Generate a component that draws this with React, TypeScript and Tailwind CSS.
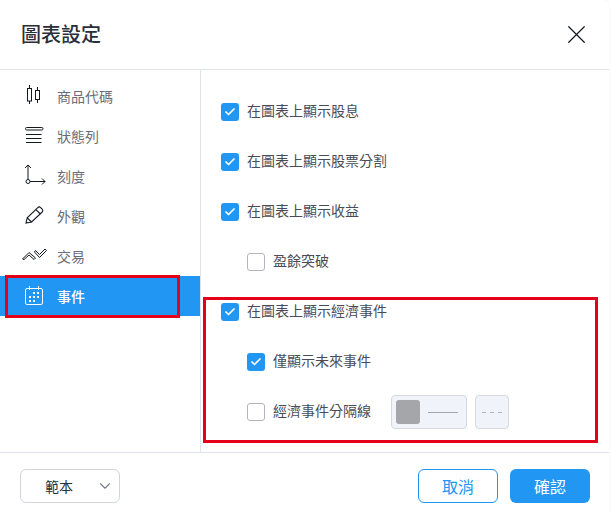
import React from 'react';
import { Check, ChevronDown, X } from 'lucide-react';

const FONT = 'font-["Noto_Sans_CJK_TC","Noto_Sans_CJK_SC",sans-serif]';

// ── Sidebar icons ────────────────────────────────────────────

const SymbolIcon = () => (
    <svg width="28" height="28" viewBox="0 0 28 28" fill="none" stroke="#131722" strokeWidth="1">
        <path d="M9.5 3v19M17.5 5v16" />
        <rect x="7.5" y="6.5" width="4" height="12.5" fill="#fff" />
        <rect x="15.5" y="8.5" width="4" height="9" fill="#fff" />
    </svg>
);

const StatusIcon = () => (
    <svg width="28" height="28" viewBox="0 0 28 28" fill="none" stroke="#131722" strokeWidth="1">
        <rect x="5.5" y="5.5" width="17.5" height="2.5" rx="1.2" />
        <path d="M6 12.5h15.5M6 16.5h15.5M6 20.5h15.5" />
    </svg>
);

const ScaleIcon = () => (
    <svg width="28" height="28" viewBox="0 0 28 28" fill="none" stroke="#131722" strokeWidth="1">
        <path d="M8 3v14.5M5 6l3-3 3 3M10 19.5h15M22 16.5l3 3-3 3" />
        <circle cx="8" cy="19.5" r="2" />
    </svg>
);

const AppearanceIcon = () => (
    <svg width="28" height="28" viewBox="0 0 28 28" fill="none" stroke="#131722" strokeWidth="1.1">
        <path d="M6 21 7.2 15.8 17.8 5.6a2 2 0 0 1 2.8 0l1.6 1.6a2 2 0 0 1 0 2.8L11.6 20z" />
        <path d="M15.8 7.6l4.6 4.4M7.2 15.8l4.4 4.2" />
    </svg>
);

const TradeIcon = () => (
    <svg width="28" height="28" viewBox="0 0 28 28" fill="none" stroke="#131722" strokeWidth="1">
        <path d="M2.5 17l6.5-6.5 6.5 5.5-1.5 1.5-5-4.5-5 4.5z" />
        <path d="M14.5 10l5 5.5 7-7-1.5-1.5-5.5 5.5-4-4z" />
    </svg>
);

const EventsIcon = () => (
    <svg width="28" height="28" viewBox="0 0 28 28" fill="none" stroke="#fff" strokeWidth="1">
        <rect x="5.5" y="6.5" width="17" height="16" rx="1.5" />
        <path d="M9.5 4v4M18.5 4v4" />
        <g fill="#fff" stroke="none">
            <rect x="13" y="10" width="2" height="2" />
            <rect x="17" y="10" width="2" height="2" />
            <rect x="9" y="14" width="2" height="2" />
            <rect x="13" y="14" width="2" height="2" />
            <rect x="17" y="14" width="2" height="2" />
            <rect x="9" y="18" width="2" height="2" />
            <rect x="13" y="18" width="2" height="2" />
        </g>
    </svg>
);

const NAV_ITEMS = [
    { label: '商品代碼', icon: <SymbolIcon /> },
    { label: '狀態列', icon: <StatusIcon /> },
    { label: '刻度', icon: <ScaleIcon /> },
    { label: '外觀', icon: <AppearanceIcon /> },
    { label: '交易', icon: <TradeIcon /> },
    { label: '事件', icon: <EventsIcon />, active: true },
];

const Box = ({ checked }: { checked: boolean }) =>
    checked ? (
        <span className="flex h-[18px] w-[18px] shrink-0 items-center justify-center rounded-[3px] bg-[#2196f3]">
            <Check size={12} color="#fff" strokeWidth={3.5} />
        </span>
    ) : (
        <span className="h-[18px] w-[18px] shrink-0 rounded-[3px] border border-[#b2b5be] bg-white" />
    );

const Row = ({ label, checked, nested, children }: { label: string; checked: boolean; nested?: boolean; children?: React.ReactNode }) => (
    <div className={`flex h-[18px] items-center ${nested ? 'pl-[26px]' : ''}`}>
        <Box checked={checked} />
        <span className="ml-2 pb-1 text-sm leading-[18px] text-[#494c56]">{label}</span>
        {children}
    </div>
);

export default function App() {
    return (
        <div className="h-[514px] w-[611px] overflow-hidden bg-white">
            <div className={`relative flex h-[514px] w-[609px] flex-col rounded-tr-md bg-white shadow-[0_0_2px_rgba(0,0,0,0.08)] ${FONT}`}>
                {/* Header */}
                <div className="flex h-[70px] shrink-0 items-center justify-between border-b border-[#e0e3eb] pl-[21px] pr-[17px]">
                    <h1 className="pb-[2px] text-xl font-medium text-[#2a2e39]">圖表設定</h1>
                    <X size={31} color="#131722" strokeWidth={0.95} />
                </div>

                {/* Body */}
                <div className="flex h-[383px] shrink-0 border-b border-[#e0e3eb]">
                    <div className="w-[201px] shrink-0 border-r border-[#e0e3eb] pt-[6px]">
                        {NAV_ITEMS.map(item => (
                            <div
                                key={item.label}
                                className={`flex h-10 items-center pl-[20px] ${item.active ? 'bg-[#2196f3] font-medium text-white' : 'text-[#6a6d78]'}`}
                            >
                                <span className="flex w-[28px] shrink-0 justify-center">{item.icon}</span>
                                <span className="ml-[9px] text-sm">{item.label}</span>
                            </div>
                        ))}
                    </div>

                    <div className="flex flex-1 flex-col gap-[32px] pl-[20px] pt-[33px]">
                        <Row label="在圖表上顯示股息" checked />
                        <Row label="在圖表上顯示股票分割" checked />
                        <Row label="在圖表上顯示收益" checked />
                        <Row label="盈餘突破" checked={false} nested />
                        <Row label="在圖表上顯示經濟事件" checked />
                        <Row label="僅顯示未來事件" checked nested />
                        <Row label="經濟事件分隔線" checked={false} nested>
                            <div className="ml-[20px] flex h-[34px] w-[76px] items-center rounded-[4px] border border-[#d6d8e0] bg-[#f0f3fa] pl-1">
                                <span className="h-6 w-6 rounded-[3px] bg-[#a5a6aa]" />
                                <span className="ml-2 h-px w-[30px] bg-[#a5a6aa]" />
                            </div>
                            <div className="ml-2 flex h-[34px] w-[34px] items-center justify-center gap-1 rounded-[4px] border border-[#d6d8e0] bg-[#f0f3fa]">
                                <span className="h-px w-1 bg-[#b2b5be]" />
                                <span className="h-px w-1 bg-[#b2b5be]" />
                                <span className="h-px w-1 bg-[#b2b5be]" />
                            </div>
                        </Row>
                    </div>
                </div>

                {/* Footer */}
                <div className="flex flex-1 items-start justify-between pl-5 pr-[19px] pt-4">
                    <div className="flex h-[34px] w-[100px] items-center justify-between rounded-md border border-[#d1d4dc] pl-6 pr-[5px] text-sm text-[#2a2e39]">
                        範本
                        <ChevronDown size={18} color="#787b86" strokeWidth={1.5} />
                    </div>
                    <div className="flex gap-3">
                        <button className="h-[34px] w-[80px] rounded-md border border-[#2196f3] bg-white text-base text-[#2196f3]">取消</button>
                        <button className="h-[34px] w-[80px] rounded-md bg-[#2196f3] text-base text-white">確認</button>
                    </div>
                </div>

                {/* Annotation overlays */}
                <div className="absolute left-[5px] top-[275px] h-[43px] w-[175px] border-[3px] border-[#e60017]" />
                <div className="absolute left-[203px] top-[297px] h-[146px] w-[395px] border-[3px] border-[#e60017]" />
            </div>
        </div>
    );
}
